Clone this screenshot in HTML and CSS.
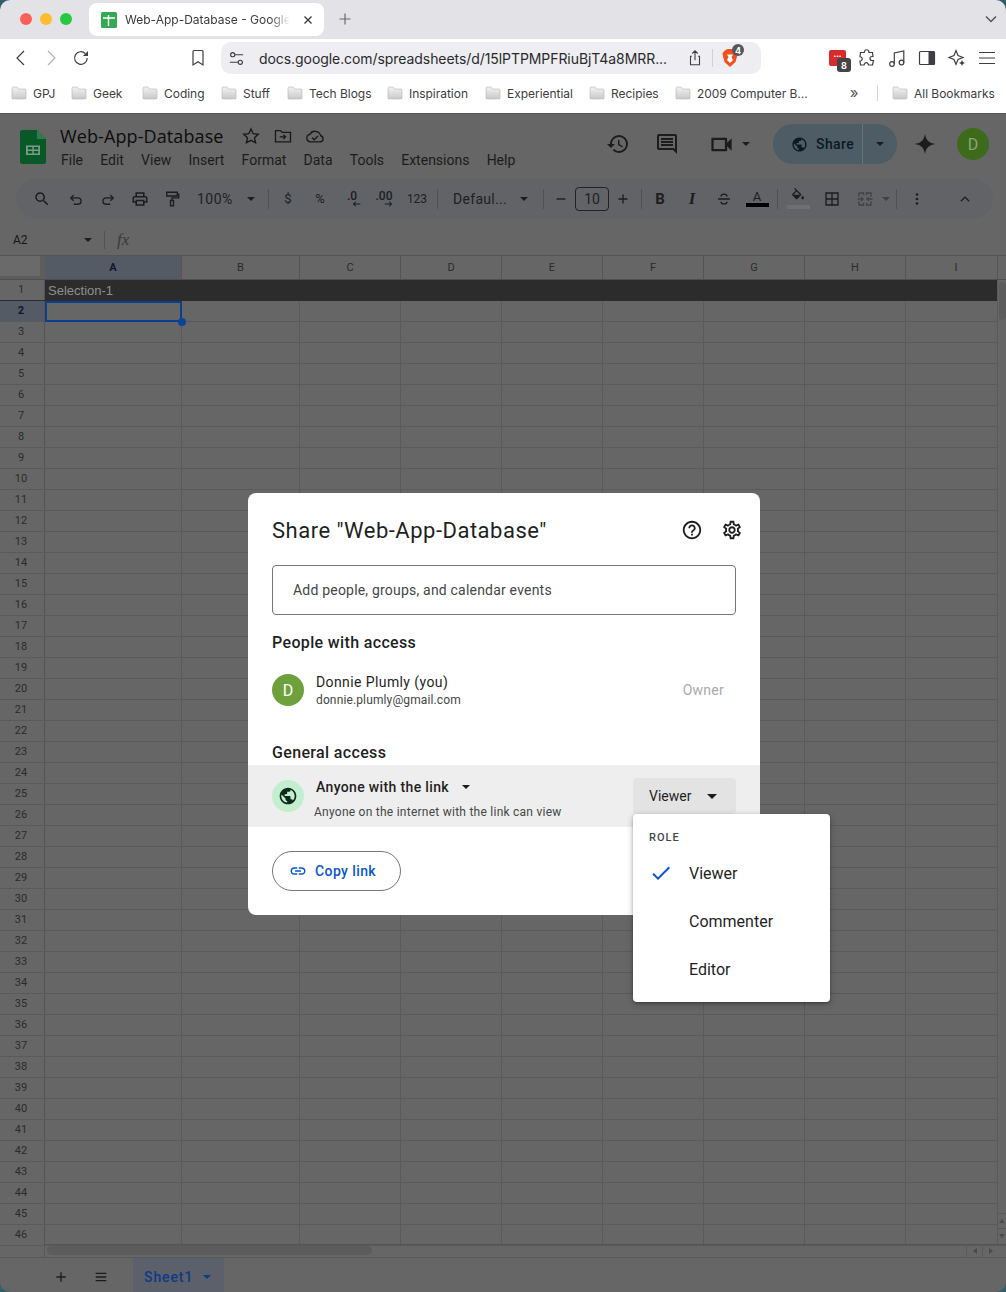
FILE: index.html
```html
<!DOCTYPE html>
<html lang="en">
<head>
  <meta charset="UTF-8" />
  <title>Web-App-Database - Google Sheets</title>
  <link rel="stylesheet" href="styles.css">
</head>
<body>
<svg class="defs" width="0" height="0">
  <defs>
    <linearGradient id="folderFill" x1="0" y1="0" x2="0" y2="1">
      <stop offset="0" stop-color="#f2f2f2" />
      <stop offset="1" stop-color="#c9c9c9" />
    </linearGradient>
    <symbol id="folder" viewBox="0 0 16 14">
      <path d="M1 3V2.2C1 1.5 1.5 1 2.2 1h3.3c.5 0 .8.2 1.1.5L7.5 3H14c.6 0 1 .4 1 1v8c0 .6-.4 1-1 1H2c-.6 0-1-.4-1-1z" fill="url(#folderFill)" stroke="#b5b5b5" stroke-width=".6" />
    </symbol>
    <symbol id="caret" viewBox="0 0 10 5"><path d="M0 0h10L5 5z" /></symbol>
  </defs>
</svg>
<div class="window">

  <div class="tabstrip">
    <div class="lights"><i class="red"></i><i class="yellow"></i><i class="green"></i></div>
    <div class="tab">
      <svg class="tab-icon" viewBox="0 0 16 16"><rect width="16" height="16" rx="1.5" fill="#34a853" /><path d="M2 6h12M7.500 3v11" stroke="#fff" stroke-width="1.500" fill="none" /></svg>
      <span class="tab-title">Web-App-Database - Google</span>
      <svg class="tab-close" viewBox="0 0 10 10"><path d="M1.5 1.5l7 7M8.5 1.5l-7 7" stroke="#3a3a3a" stroke-width="1.3" /></svg>
    </div>
    <svg class="new-tab" viewBox="0 0 12 12"><path d="M6 .5v11M.5 6h11" stroke="#6a6a6e" stroke-width="1.2" /></svg>
    <svg class="tab-list" viewBox="0 0 12 8"><path d="M1 1.5l5 5 5-5" stroke="#55555a" stroke-width="1.5" fill="none" /></svg>
  </div>

  <div class="navbar">
    <svg class="nav-icon back" viewBox="0 0 20 20"><path d="M13 3l-7 7 7 7" /></svg>
    <svg class="nav-icon forward" viewBox="0 0 20 20"><path d="M7 3l7 7-7 7" /></svg>
    <svg class="nav-icon reload" viewBox="0 0 20 20"><path d="M16.2 10a6.3 6.3 0 1 1-1.9-4.5" /><path class="solid" d="M17 3v5h-5z" /></svg>
    <svg class="nav-icon bookmark" viewBox="0 0 20 20"><path d="M5 3.5c0-.5.4-1 1-1h8c.6 0 1 .5 1 1V17l-5-3.2L5 17z" /></svg>
    <div class="urlbar">
      <svg class="nav-icon tune" viewBox="0 0 20 20"><circle cx="6" cy="6" r="2.2" /><path d="M8.5 6H17M3 14h8.500" /><circle cx="14" cy="14" r="2.2" /></svg>
      <span class="url">docs.google.com/spreadsheets/d/15lPTPMPFRiuBjT4a8MRR...</span>
      <svg class="nav-icon share-mac" viewBox="0 0 20 20"><path d="M6.500 8H5v9.500h10V8h-1.500M10 12.500V2.500M7 5l3-3 3 3" /></svg>
      <i class="url-sep"></i>
      <div class="brave">
        <svg viewBox="0 0 16 18"><path d="M3 1.500L5.500 0h5L13 1.500 15.500 4 15 7.500 13.500 13 8 18 2.500 13 1 7.500.5 4z" fill="#f1501f" /><path d="M5 5.500h6L9.500 8 11 11l-3 3-3-3 1.500-3z" fill="#fff" /></svg>
        <b class="badge brave-count">4</b>
      </div>
    </div>
    <div class="ext-red"><span>•••</span><b class="badge ext-count">8</b></div>
    <svg class="nav-icon puzzle" viewBox="0 0 20 20"><path d="M7.500 3.500a2.200 2.200 0 0 1 4.300 0l.2 1h3.500l.5 4h-1a2 2 0 0 0 0 4h1.500l-1 4.500h-4l-.3-1a2 2 0 0 0-3.800 0l-.2 1H3.500l-.5-4 1-.3a2 2 0 0 0 0-3.700l-1-.3.5-4.200h3.700z" /></svg>
    <svg class="nav-icon music" viewBox="0 0 20 20"><circle cx="5" cy="16" r="2.300" /><circle cx="14.500" cy="14.500" r="2.300" /><path d="M7.300 16V5l9.500-2v11.500" /></svg>
    <svg class="nav-icon panel" viewBox="0 0 20 20"><rect x="2.500" y="3.500" width="15" height="13" rx="1" /><path class="solid" d="M11.500 3.500h6v13h-6z" /></svg>
    <svg class="nav-icon sparkle" viewBox="0 0 20 20"><path d="M9 2.500l2 5 5 2-5 2-2 5-2-5-5-2 5-2z" /><path class="solid" d="M15 12l.9 2.100 2.100.9-2.100.9L15 18l-.9-2.100L12 15l2.100-.9z" /></svg>
    <svg class="nav-icon hamburger" viewBox="0 0 20 20"><path d="M2 4.500h16M2 10h16M2 15.500h16" /></svg>
  </div>

  <div class="bookmarks">
    <a class="bm bm-gpj"><svg><use href="#folder" /></svg>GPJ</a>
    <a class="bm bm-geek"><svg><use href="#folder" /></svg>Geek</a>
    <a class="bm bm-coding"><svg><use href="#folder" /></svg>Coding</a>
    <a class="bm bm-stuff"><svg><use href="#folder" /></svg>Stuff</a>
    <a class="bm bm-tech"><svg><use href="#folder" /></svg>Tech Blogs</a>
    <a class="bm bm-insp"><svg><use href="#folder" /></svg>Inspiration</a>
    <a class="bm bm-exp"><svg><use href="#folder" /></svg>Experiential</a>
    <a class="bm bm-rec"><svg><use href="#folder" /></svg>Recipies</a>
    <a class="bm bm-comp"><svg><use href="#folder" /></svg>2009 Computer B...</a>
    <span class="bm-more">&raquo;</span>
    <i class="bm-sep"></i>
    <a class="bm"><svg><use href="#folder" /></svg>All Bookmarks</a>
  </div>

  <div class="app">
    <div class="header">
      <svg class="sheets-logo" viewBox="0 0 26 34"><path d="M2.500 0H17l9 9v22.500a2.500 2.500 0 0 1-2.500 2.500h-21A2.500 2.500 0 0 1 0 31.500v-29A2.500 2.500 0 0 1 2.500 0z" fill="#075a28" /><path d="M17 0l9 9h-9z" fill="#2f7d4e" /><path d="M6 15.500h14v9.500H6zM7.800 17v2.500h4.500V17zm6 0v2.500h4.500V17zm-6 4v2.500h4.500V21zm6 0v2.500h4.500V21z" fill="#7d9a88" fill-rule="evenodd" /></svg>
      <div class="doc-info">
        <div class="doc-title-row">
          <span class="doc-title">Web-App-Database</span>
          <svg class="doc-icon star" viewBox="0 0 24 24"><path d="M12 3.500l2.600 5.700 6.200.7-4.600 4.200 1.300 6.100L12 17.200l-5.500 3 1.300-6.100-4.600-4.200 6.200-.7z" /></svg>
          <svg class="doc-icon move" viewBox="0 0 24 24"><path d="M3 5.500h6l2 2.200h10V19H3zM8 13h7M12.500 10.500L15 13l-2.500 2.500" /></svg>
          <svg class="doc-icon cloud" viewBox="0 0 24 24"><path d="M6.500 19a4.500 4.500 0 0 1-.7-8.900 7 7 0 0 1 13 1.600A3.700 3.700 0 0 1 18 19zM8.500 14l2.500 2.500 4.500-4.500" /></svg>
        </div>
        <div class="menus">
          <span>File</span><span>Edit</span><span>View</span><span>Insert</span><span>Format</span><span>Data</span><span>Tools</span><span>Extensions</span><span>Help</span>
        </div>
      </div>
      <div class="header-right">
        <svg class="head-icon history" viewBox="0 0 24 24"><path d="M13 3a9 9 0 0 0-9 9H1l3.890 3.890.07.14L9 12H6c0-3.870 3.130-7 7-7s7 3.130 7 7-3.130 7-7 7c-1.930 0-3.680-.79-4.940-2.060l-1.420 1.420A8.954 8.954 0 0 0 13 21a9 9 0 0 0 0-18zm-1 5v5l4.280 2.540.72-1.210-3.500-2.080V8H12z" /></svg>
        <svg class="head-icon comment" viewBox="0 0 24 24"><path d="M20 17.170L18.830 16H4V4h16v13.170zM20 2H4c-1.100 0-2 .9-2 2v12c0 1.100.9 2 2 2h14l4 4V4c0-1.100-.9-2-2-2zM6 12h12v2H6zM6 9h12v2H6zM6 6h12v2H6z" /></svg>
        <svg class="head-icon video" viewBox="0 0 24 24"><path d="M15 8v8H5V8h10m1-2H4c-.55 0-1 .45-1 1v10c0 .55.45 1 1 1h12c.55 0 1-.45 1-1v-3.500l4 4v-11l-4 4V7c0-.55-.45-1-1-1z" /></svg>
        <svg class="caret video-caret"><use href="#caret" /></svg>
        <div class="share-btn">
          <div class="share-main">
            <svg viewBox="0 0 24 24"><path d="M12 2C6.480 2 2 6.480 2 12s4.480 10 10 10 10-4.480 10-10S17.520 2 12 2zm-1 17.930c-3.950-.49-7-3.850-7-7.930 0-.62.08-1.210.21-1.790L9 15v1c0 1.100.9 2 2 2v1.930zm6.900-2.540c-.26-.81-1-1.390-1.900-1.390h-1v-3c0-.55-.45-1-1-1H8v-2h2c.55 0 1-.45 1-1V7h2c1.100 0 2-.9 2-2v-.41c2.930 1.190 5 4.060 5 7.410 0 2.080-.8 3.970-2.100 5.390z" /></svg>
            Share
          </div>
          <div class="share-drop"><svg class="caret"><use href="#caret" /></svg></div>
        </div>
        <svg class="head-icon gemini" viewBox="0 0 24 24"><path d="M12 1.500C12.700 8 16 11.300 22.500 12 16 12.700 12.700 16 12 22.500 11.300 16 8 12.700 1.500 12 8 11.300 11.300 8 12 1.500z" /></svg>
        <div class="avatar-top">D</div>
      </div>
    </div>

    <div class="toolbar">
      <button class="tb search"><svg viewBox="0 0 24 24"><path class="solid" d="M15.500 14h-.79l-.28-.27A6.471 6.471 0 0 0 16 9.500 6.500 6.500 0 1 0 9.500 16c1.610 0 3.090-.59 4.230-1.570l.27.28v.79l5 4.990L20.490 19l-4.990-5zm-6 0C7.010 14 5 11.990 5 9.500S7.010 5 9.500 5 14 7.010 14 9.500 11.990 14 9.500 14z" /></svg></button>
      <button class="tb undo"><svg viewBox="0 0 24 24"><path d="M9 6.500L5 10.500l4 4M5 10.500h9.500a4.200 4.200 0 0 1 0 8.500H9" /></svg></button>
      <button class="tb"><svg viewBox="0 0 24 24"><path d="M15 6.500l4 4-4 4M19 10.500H9.500a4.200 4.200 0 0 0 0 8.500H15" /></svg></button>
      <button class="tb"><svg viewBox="0 0 24 24"><path class="solid" d="M19 8h-1V3H6v5H5c-1.660 0-3 1.340-3 3v6h4v4h12v-4h4v-6c0-1.660-1.340-3-3-3zM8 5h8v3H8V5zm8 12v2H8v-4h8v2zm2-2v-2H6v2H4v-4c0-.55.45-1 1-1h14c.55 0 1 .45 1 1v4h-2z" /></svg></button>
      <button class="tb"><svg viewBox="0 0 24 24"><path d="M5 3h14v5H5zM19 5.500h2v5h-9v3M10 14h4v7h-4z" /></svg></button>
      <div class="zoom-select"><span>100%</span><svg class="caret"><use href="#caret" /></svg></div>
      <i class="tb-sep"></i>
      <button class="tb tb-text">$</button>
      <button class="tb tb-text">%</button>
      <button class="tb tb-dec">.0<svg viewBox="0 0 12 8"><path d="M11 4H2M5 1L2 4l3 3" /></svg></button>
      <button class="tb tb-dec">.00<svg viewBox="0 0 12 8"><path d="M1 4h9M7 1l3 3-3 3" /></svg></button>
      <button class="tb tb-num">123</button>
      <i class="tb-sep"></i>
      <div class="font-select"><span>Defaul...</span><svg class="caret"><use href="#caret" /></svg></div>
      <i class="tb-sep"></i>
      <button class="tb tb-size"><svg viewBox="0 0 24 24"><path d="M6 12h12" /></svg></button>
      <div class="size-box">10</div>
      <button class="tb tb-size"><svg viewBox="0 0 24 24"><path d="M6 12h12M12 6v12" /></svg></button>
      <i class="tb-sep"></i>
      <button class="tb tb-bold">B</button>
      <button class="tb tb-ital">I</button>
      <button class="tb"><svg viewBox="0 0 24 24"><path d="M4 12h16M16 8.500C16 6.500 14 5.500 12 5.500S8 6.500 8 8.500M8 15.500c0 2 2 3 4 3s4-1 4-3" /></svg></button>
      <button class="tb tb-color tb-a"><span>A</span><i class="swatch black"></i></button>
      <i class="tb-sep"></i>
      <button class="tb tb-color tb-fill"><svg viewBox="0 0 24 24"><path class="solid" d="M16.560 8.940L7.620 0 6.210 1.410l2.380 2.380-5.150 5.150c-.59.59-.59 1.540 0 2.120l5.500 5.500c.29.29.68.44 1.060.44s.77-.15 1.060-.44l5.500-5.500c.59-.58.59-1.530 0-2.120zM5.210 10L10 5.210 14.790 10H5.210zM19 11.500s-2 2.170-2 3.500c0 1.100.9 2 2 2s2-.9 2-2c0-1.330-2-3.500-2-3.500z" /></svg><i class="swatch fill"></i></button>
      <button class="tb borders"><svg viewBox="0 0 24 24"><path d="M4 4h16v16H4zM12 4v16M4 12h16" /></svg></button>
      <button class="tb merge"><svg viewBox="0 0 24 24"><path d="M4 9V4h6v3M14 7V4h6v5M4 15v5h6v-3M14 17v3h6v-5M2 12h7M22 12h-7M7 9.500L9.500 12 7 14.500M17 9.500L14.500 12l2.500 2.500" /></svg></button>
      <svg class="caret merge-caret"><use href="#caret" /></svg>
      <i class="tb-sep"></i>
      <button class="tb more"><svg viewBox="0 0 24 24"><circle class="solid" cx="12" cy="6" r="1.800" /><circle class="solid" cx="12" cy="12" r="1.800" /><circle class="solid" cx="12" cy="18" r="1.800" /></svg></button>
      <button class="tb collapse"><svg viewBox="0 0 24 24"><path d="M6.500 15l5.500-5.500 5.500 5.500" /></svg></button>
    </div>

    <div class="formula">
      <span class="cell-name">A2</span>
      <svg class="caret"><use href="#caret" /></svg>
      <i class="formula-sep"></i>
      <span class="fx">fx</span>
    </div>

    <div class="col-heads">
      <div class="corner"></div>
      <div class="ch col-a on">A</div>
      <div class="ch col-b">B</div>
      <div class="ch col-n">C</div>
      <div class="ch col-n">D</div>
      <div class="ch col-n">E</div>
      <div class="ch col-n">F</div>
      <div class="ch col-n">G</div>
      <div class="ch col-n">H</div>
      <div class="ch col-i">I</div>
    </div>

    <div class="grid">
      <div class="col-lines">
        <i class="col-a"></i><i class="col-b"></i><i class="col-n"></i><i class="col-n"></i><i class="col-n"></i><i class="col-n"></i><i class="col-n"></i><i class="col-n"></i><i class="col-i"></i>
      </div>
      <div class="row band"><b>1</b><span>Selection-1</span></div>
      <div class="row"><b class="on">2</b><div class="selection"><i class="handle"></i></div></div>
      <div class="row"><b>3</b></div><div class="row"><b>4</b></div><div class="row"><b>5</b></div><div class="row"><b>6</b></div>
      <div class="row"><b>7</b></div><div class="row"><b>8</b></div><div class="row"><b>9</b></div><div class="row"><b>10</b></div>
      <div class="row"><b>11</b></div><div class="row"><b>12</b></div><div class="row"><b>13</b></div><div class="row"><b>14</b></div>
      <div class="row"><b>15</b></div><div class="row"><b>16</b></div><div class="row"><b>17</b></div><div class="row"><b>18</b></div>
      <div class="row"><b>19</b></div><div class="row"><b>20</b></div><div class="row"><b>21</b></div><div class="row"><b>22</b></div>
      <div class="row"><b>23</b></div><div class="row"><b>24</b></div><div class="row"><b>25</b></div><div class="row"><b>26</b></div>
      <div class="row"><b>27</b></div><div class="row"><b>28</b></div><div class="row"><b>29</b></div><div class="row"><b>30</b></div>
      <div class="row"><b>31</b></div><div class="row"><b>32</b></div><div class="row"><b>33</b></div><div class="row"><b>34</b></div>
      <div class="row"><b>35</b></div><div class="row"><b>36</b></div><div class="row"><b>37</b></div><div class="row"><b>38</b></div>
      <div class="row"><b>39</b></div><div class="row"><b>40</b></div><div class="row"><b>41</b></div><div class="row"><b>42</b></div>
      <div class="row"><b>43</b></div><div class="row"><b>44</b></div><div class="row"><b>45</b></div><div class="row"><b>46</b></div>
      <div class="vscroll">
        <i class="vthumb"></i>
        <div class="varrows"><i class="up"></i><i class="down"></i></div>
      </div>
    </div>

    <div class="hscroll">
      <i class="hscroll-gutter"></i>
      <div class="htrack"><i class="hthumb"></i></div>
      <div class="harrows"><i class="left"></i><i class="right"></i></div>
    </div>

    <div class="sheet-tabs">
      <svg class="st-icon add" viewBox="0 0 24 24"><path d="M12 5v14M5 12h14" /></svg>
      <svg class="st-icon all" viewBox="0 0 24 24"><path d="M4 6.500h16M4 12h16M4 17.500h16" /></svg>
      <div class="sheet-tab">Sheet1<svg class="caret"><use href="#caret" /></svg></div>
    </div>

    <div class="dialog">
      <div class="dialog-head">
        <h2>Share "Web-App-Database"</h2>
        <svg class="dialog-icon" viewBox="0 0 24 24"><path d="M11 18h2v-2h-2v2zm1-16C6.480 2 2 6.480 2 12s4.480 10 10 10 10-4.480 10-10S17.520 2 12 2zm0 18c-4.410 0-8-3.590-8-8s3.590-8 8-8 8 3.590 8 8-3.590 8-8 8zm0-14c-2.210 0-4 1.790-4 4h2c0-1.100.9-2 2-2s2 .9 2 2c0 2-3 1.750-3 5h2c0-2.250 3-2.500 3-5 0-2.210-1.790-4-4-4z" /></svg>
        <svg class="dialog-icon" viewBox="0 0 24 24"><path d="M19.430 12.980c.04-.32.07-.64.07-.98 0-.34-.03-.66-.07-.98l2.110-1.650c.19-.15.24-.42.12-.64l-2-3.460c-.09-.16-.26-.25-.44-.25-.06 0-.12.01-.17.03l-2.490 1c-.52-.4-1.080-.73-1.690-.98l-.38-2.650C14.460 2.180 14.250 2 14 2h-4c-.25 0-.46.18-.49.42l-.38 2.650c-.61.25-1.170.59-1.690.98l-2.490-1c-.06-.02-.12-.03-.18-.03-.17 0-.34.09-.43.25l-2 3.460c-.13.22-.07.49.12.64l2.110 1.650c-.04.32-.07.65-.07.98 0 .33.03.66.07.98l-2.110 1.650c-.19.15-.24.42-.12.64l2 3.460c.09.16.26.25.44.25.06 0 .12-.01.17-.03l2.490-1c.52.4 1.080.73 1.690.98l.38 2.650c.03.24.24.42.49.42h4c.25 0 .46-.18.49-.42l.38-2.650c.61-.25 1.170-.59 1.690-.98l2.490 1c.06.02.12.03.18.03.17 0 .34-.09.43-.25l2-3.460c.12-.22.07-.49-.12-.64l-2.110-1.650zm-1.980-1.710c.04.31.05.52.05.73 0 .21-.02.43-.05.73l-.14 1.130.89.7 1.080.84-.7 1.210-1.270-.51-1.040-.42-.9.68c-.43.32-.84.56-1.250.73l-1.060.43-.16 1.130-.2 1.350h-1.400l-.19-1.350-.16-1.130-1.060-.43c-.43-.18-.83-.41-1.230-.71l-.91-.7-1.060.43-1.270.51-.7-1.210 1.080-.84.89-.7-.14-1.130c-.03-.31-.05-.54-.05-.74s.02-.43.05-.73l.14-1.130-.89-.7-1.080-.84.7-1.210 1.270.51 1.040.42.9-.68c.43-.32.84-.56 1.250-.73l1.060-.43.16-1.130.2-1.350h1.390l.19 1.350.16 1.130 1.060.43c.43.18.83.41 1.230.71l.91.7 1.060-.43 1.270-.51.7 1.210-1.070.85-.89.7.14 1.130zM12 8c-2.210 0-4 1.790-4 4s1.790 4 4 4 4-1.790 4-4-1.790-4-4-4zm0 6c-1.100 0-2-.9-2-2s.9-2 2-2 2 .9 2 2-.9 2-2 2z" /></svg>
      </div>
      <div class="add-people">Add people, groups, and calendar events</div>
      <h3 class="people-title">People with access</h3>
      <div class="person">
        <div class="avatar">D</div>
        <div class="person-text">
          <div class="person-name">Donnie Plumly (you)</div>
          <div class="person-mail">donnie.plumly@gmail.com</div>
        </div>
        <span class="owner">Owner</span>
      </div>
      <h3 class="general-title">General access</h3>
      <div class="access-row">
        <div class="globe"><svg viewBox="0 0 24 24"><path d="M12 2C6.480 2 2 6.480 2 12s4.480 10 10 10 10-4.480 10-10S17.520 2 12 2zm-1 17.930c-3.950-.49-7-3.850-7-7.930 0-.62.08-1.210.21-1.790L9 15v1c0 1.100.9 2 2 2v1.930zm6.900-2.540c-.26-.81-1-1.390-1.900-1.390h-1v-3c0-.55-.45-1-1-1H8v-2h2c.55 0 1-.45 1-1V7h2c1.100 0 2-.9 2-2v-.41c2.930 1.190 5 4.060 5 7.410 0 2.080-.8 3.970-2.100 5.390z" /></svg></div>
        <div class="access-text">
          <div class="access-name">Anyone with the link<svg class="caret"><use href="#caret" /></svg></div>
          <div class="access-desc">Anyone on the internet with the link can view</div>
        </div>
        <div class="role-btn">Viewer<svg class="caret"><use href="#caret" /></svg></div>
      </div>
      <div class="dialog-foot">
        <div class="copy-link">
          <svg viewBox="0 0 24 24"><path d="M3.900 12c0-1.710 1.390-3.100 3.100-3.100h4V7H7c-2.760 0-5 2.240-5 5s2.240 5 5 5h4v-1.900H7c-1.710 0-3.100-1.390-3.100-3.100zM8 13h8v-2H8v2zm9-6h-4v1.900h4c1.710 0 3.100 1.390 3.100 3.100s-1.390 3.100-3.100 3.100h-4V17h4c2.760 0 5-2.240 5-5s-2.240-5-5-5z" /></svg>
          Copy link
        </div>
      </div>
    </div>

    <div class="role-menu">
      <div class="role-label">ROLE</div>
      <div class="role-item"><svg viewBox="0 0 24 24"><path d="M9 16.170L4.830 12l-1.420 1.410L9 19 21 7l-1.410-1.410z" /></svg>Viewer</div>
      <div class="role-item">Commenter</div>
      <div class="role-item">Editor</div>
    </div>
  </div>
</div>
</body>
</html>
```

FILE: styles.css
```css
* {
  box-sizing: border-box;
}
html, body {
  margin: 0;
  padding: 0;
  background: #2f5f6b;
}
body {
  width: 1006px;
  height: 1292px;
  overflow: hidden;
  font-family: 'Roboto', 'Liberation Sans', sans-serif;
}
i {
  display: block;
  font-style: normal;
}
.defs {
  position: absolute;
}
.window {
  width: 1006px;
  height: 1292px;
  border-radius: 10px;
  overflow: hidden;
  display: flex;
  flex-direction: column;
}
.caret {
  width: 8px;
  height: 4px;
  fill: #1c1c1e;
  flex: none;
}

/* browser chrome */
.tabstrip {
  height: 39px;
  background: #e2e2e7;
  display: flex;
  align-items: flex-start;
  flex: none;
}
.lights {
  display: flex;
  gap: 8px;
  margin: 13px 0 0 20px;
  width: 69px;
}
.lights i {
  width: 12px;
  height: 12px;
  border-radius: 50%;
}
.red { background: #fe5f57; }
.yellow { background: #febc2e; }
.green { background: #28c840; }
.tab {
  width: 235px;
  height: 33px;
  margin-top: 3px;
  background: #fff;
  border-radius: 8px;
  display: flex;
  align-items: center;
  padding: 0 11px 0 12px;
}
.tab-icon {
  width: 16px;
  height: 16px;
  flex: none;
}
.tab-title {
  margin-left: 8px;
  width: 165px;
  white-space: nowrap;
  font: 12px 'Inter', sans-serif;
  color: #3c3c3c;
  -webkit-mask-image: linear-gradient(to right, #000 88%, transparent);
}
.tab-close {
  width: 10px;
  height: 10px;
  margin-left: 13px;
  flex: none;
}
.new-tab {
  width: 12px;
  height: 12px;
  margin: 13px 0 0 15px;
}
.tab-list {
  width: 12px;
  height: 8px;
  margin: 15px 0 0 634px;
}
.navbar {
  height: 38px;
  background: #fff;
  display: flex;
  align-items: center;
  flex: none;
}
.nav-icon {
  width: 20px;
  height: 20px;
  fill: none;
  stroke: #3f3f43;
  stroke-width: 1.2;
  flex: none;
}
.nav-icon .solid {
  fill: #3f3f43;
  stroke: none;
}
.back { margin-left: 11px; }
.forward { margin-left: 10px; stroke: #b4b4b8; }
.reload { margin-left: 10px; }
.bookmark { margin-left: 97px; }
.urlbar {
  width: 540px;
  height: 32px;
  margin-left: 13px;
  background: #ededf2;
  border-radius: 10px;
  display: flex;
  align-items: center;
  flex: none;
}
.tune {
  margin-left: 6px;
  width: 19px;
  height: 19px;
}
.url {
  margin-left: 13px;
  width: 415px;
  font: 14px 'Inter', sans-serif;
  letter-spacing: -0.07px;
  color: #2a2a2c;
  white-space: nowrap;
}
.share-mac {
  margin-left: 12px;
  width: 18px;
  height: 18px;
}
.url-sep {
  width: 1px;
  height: 18px;
  background: #cfcfd4;
  margin-left: 8px;
}
.brave {
  position: relative;
  width: 16px;
  height: 18px;
  margin-left: 9px;
}
.brave svg {
  width: 16px;
  height: 18px;
  display: block;
}
.badge {
  position: absolute;
  display: flex;
  align-items: center;
  justify-content: center;
  background: #55565f;
  color: #fff;
  font: bold 9px 'Inter', sans-serif;
}
.brave-count {
  left: 10px;
  top: -5px;
  width: 12px;
  height: 12px;
  border-radius: 50%;
}
.ext-red {
  position: relative;
  width: 17px;
  height: 16px;
  margin-left: 68px;
  background: #d92b2b;
  border-radius: 2px;
  color: #fff;
  font-size: 8px;
  line-height: 14px;
  text-align: center;
  flex: none;
}
.ext-count {
  left: 8px;
  top: 8px;
  width: 14px;
  height: 14px;
  border-radius: 3px;
  background: #444;
}
.puzzle { margin-left: 11px; }
.music { margin-left: 10px; }
.panel { margin-left: 10px; }
.sparkle { margin-left: 10px; }
.hamburger { margin-left: 10px; }
.bookmarks {
  height: 37px;
  background: #fff;
  border-bottom: 1px solid #555;
  display: flex;
  align-items: center;
  padding: 0 0 4px 11px;
  flex: none;
  font: 12px 'Inter', sans-serif;
  letter-spacing: -0.03px;
  color: #3d3d3f;
}
.bm {
  display: flex;
  align-items: center;
  gap: 6px;
  white-space: nowrap;
}
.bm svg {
  width: 16px;
  height: 14px;
}
.bm-gpj { width: 60px; }
.bm-geek { width: 71px; }
.bm-coding { width: 79px; }
.bm-stuff { width: 66px; }
.bm-tech { width: 100px; }
.bm-insp { width: 98px; }
.bm-exp { width: 104px; }
.bm-rec { width: 86px; }
.bm-comp { width: 167px; }
.bm-more {
  width: 24px;
  font-size: 15px;
  text-align: center;
  margin-top: -2px;
  color: #55555a;
}
.bm-sep {
  width: 1px;
  height: 16px;
  background: #d5d5d8;
  margin: 0 14px 0 11px;
}

/* sheets app, already dimmed by the dialog scrim */
.app {
  position: relative;
  flex: 1;
  background: #666;
  color: #151515;
  display: flex;
  flex-direction: column;
}
.header {
  height: 65px;
  display: flex;
  align-items: flex-start;
  flex: none;
}
.sheets-logo {
  width: 26px;
  height: 34px;
  margin: 16px 0 0 20px;
  flex: none;
}
.doc-info {
  margin-left: 14px;
}
.doc-title-row {
  display: flex;
  align-items: center;
  height: 24px;
  margin-top: 10px;
}
.doc-title {
  font: 18px 'Open Sans', sans-serif;
  letter-spacing: 0.1px;
  color: #0d0d0d;
  width: 164px;
  white-space: nowrap;
}
.doc-icon {
  width: 20px;
  height: 20px;
  fill: none;
  stroke: #191919;
  stroke-width: 1.6;
  margin-right: 12px;
}
.star { margin-left: 17px; }
.menus {
  display: flex;
  font-size: 14px;
  color: #1c1c1c;
  margin: 3px 0 0 1px;
  gap: 17.2px;
  line-height: 18px;
}
.header-right {
  position: absolute;
  top: 10px;
  right: 17px;
  display: flex;
  align-items: center;
  height: 40px;
}
.head-icon {
  width: 24px;
  height: 24px;
  fill: #1c1c1c;
}
.history { margin-right: 25px; }
.comment { margin-right: 29px; }
.video {
  width: 27px;
  height: 27px;
  margin-right: 7px;
}
.video-caret { margin-right: 23px; }
.share-btn {
  display: flex;
  width: 124px;
  height: 40px;
  border-radius: 20px;
  background: #4e5c66;
  overflow: hidden;
  font: 500 14px 'Roboto', sans-serif;
  color: #0b1a24;
}
.share-main {
  width: 90px;
  border-right: 1px solid #66737c;
  display: flex;
  align-items: center;
  padding-left: 18px;
  gap: 8px;
  letter-spacing: .4px;
}
.share-main svg {
  width: 17px;
  height: 17px;
  fill: #0b1a24;
}
.share-drop {
  flex: 1;
  display: flex;
  align-items: center;
  justify-content: center;
}
.gemini {
  margin-left: 16px;
  width: 24px;
  height: 24px;
}
.avatar-top {
  margin-left: 20px;
  width: 32px;
  height: 32px;
  border-radius: 50%;
  background: #3e6a1c;
  color: #8aa676;
  font-size: 16px;
  display: flex;
  align-items: center;
  justify-content: center;
}
.toolbar {
  margin: 0 13px 0 16px;
  height: 39px;
  background: #626366;
  border-radius: 20px;
  display: flex;
  align-items: center;
  padding-left: 10px;
  flex: none;
}
.tb {
  width: 32px;
  height: 32px;
  padding: 0;
  border: 0;
  background: none;
  display: flex;
  flex-direction: column;
  align-items: center;
  justify-content: center;
  color: #1d1d1e;
  flex: none;
  font-family: 'Roboto', sans-serif;
}
.tb svg {
  width: 18px;
  height: 18px;
  fill: none;
  stroke: #1d1d1e;
  stroke-width: 1.8;
}
.tb svg .solid {
  fill: #1d1d1e;
  stroke: none;
}
.search { margin-right: 2px; }
.zoom-select {
  width: 76px;
  display: flex;
  align-items: center;
  padding-left: 9px;
  font-size: 14px;
  color: #202022;
  gap: 13px;
  letter-spacing: .5px;
}
.zoom-select span {
  width: 37px;
}
.tb-sep {
  width: 1px;
  height: 20px;
  background: #4f5053;
  margin: 0 3.5px;
  flex: none;
}
.tb-text {
  font-size: 13px;
}
.tb-dec {
  font-size: 12px;
  font-weight: 500;
  line-height: 10px;
}
.tb-dec svg {
  width: 9px;
  height: 6px;
  stroke-width: 1.4;
  margin: 0 0 0 8px;
}
.tb-num {
  font-size: 12px;
  margin-left: 1px;
}
.font-select {
  width: 86px;
  margin-left: 12px;
  display: flex;
  align-items: center;
  font-size: 14px;
  color: #202022;
  gap: 13px;
  letter-spacing: .3px;
}
.font-select span {
  width: 54px;
}
.tb-size {
  width: 28px;
}
.size-box {
  width: 34px;
  height: 24px;
  border: 1px solid #222;
  border-radius: 4px;
  font-size: 14px;
  display: flex;
  align-items: center;
  justify-content: center;
  color: #202022;
}
.tb-bold {
  font-size: 15px;
  font-weight: 700;
  margin-left: -1px;
}
.tb-ital {
  font-size: 17px;
  font-style: italic;
  font-weight: 700;
  font-family: 'Liberation Serif', serif;
}
.tb-color {
  font-size: 13px;
  line-height: 13px;
}
.tb-a {
  margin-left: 1px;
}
.swatch {
  width: 23px;
  height: 4px;
}
.swatch.black { background: #000; }
.swatch.fill { background: #6f6f6f; }
.tb-fill {
  margin-left: 1px;
}
.tb-color svg {
  width: 16px;
  height: 16px;
  margin-bottom: 1px;
}
.borders {
  margin-left: 2px;
}
.merge {
  margin-left: 1px;
  opacity: .45;
}
.merge-caret {
  opacity: .45;
  margin: 0 2.5px 0 1px;
}
.collapse {
  margin-left: 16px;
}
.formula {
  height: 37px;
  display: flex;
  align-items: center;
  padding: 7px 0 0 13px;
  flex: none;
  font-size: 12px;
  color: #151515;
}
.cell-name {
  width: 71px;
}
.formula-sep {
  width: 1px;
  height: 18px;
  background: #555;
  margin: 0 12px 0 12px;
}
.fx {
  font: italic 17px 'Liberation Serif', serif;
  color: #3a3a3a;
}
.col-heads {
  height: 25px;
  display: flex;
  flex: none;
  border-top: 1px solid #545454;
  border-bottom: 1px solid #4f4f4f;
  font-size: 11px;
  color: #2b2b2b;
}
.corner {
  width: 45px;
  background: #6a6a6a;
  border-right: 5px solid #5d5d5d;
  border-bottom: 3px solid #5d5d5d;
}
.ch {
  display: flex;
  align-items: center;
  justify-content: center;
  border-right: 1px solid #555;
}
.ch.on {
  background: #545b65;
  color: #0b1a33;
  font-weight: 700;
}
.col-a { width: 137px; }
.col-b { width: 118px; }
.col-n { width: 101px; }
.col-i { width: 92px; }
.ch.col-i {
  padding-left: 9px;
}
.grid {
  position: relative;
  height: 965px;
  flex: none;
  border-bottom: 1px solid #555;
}
.col-lines {
  position: absolute;
  left: 45px;
  top: 0;
  bottom: 0;
  display: flex;
}
.col-lines i {
  border-right: 1px solid #5a5a5a;
}
.row {
  height: 21px;
  display: flex;
  border-bottom: 1px solid #5a5a5a;
  font-size: 11px;
  position: relative;
}
.row b {
  width: 45px;
  flex: none;
  border-right: 1px solid #555;
  text-align: center;
  font-weight: 400;
  color: #2b2b2b;
  line-height: 20px;
  padding-right: 2px;
  background: #666;
}
.row b.on {
  background: #545b65;
  color: #0b1a33;
  font-weight: 700;
}
.row.band {
  border-bottom-color: #2c2c2c;
}
.band span {
  display: block;
  flex: none;
  width: 952px;
  background: #2c2c2c;
  color: #8f8f8f;
  font: 13px 'Liberation Sans', sans-serif;
  line-height: 21px;
  padding-left: 3px;
}
.selection {
  position: absolute;
  left: 45px;
  top: 0;
  width: 137px;
  height: 21px;
  border: 2px solid #0a3f8f;
}
.handle {
  position: absolute;
  right: -6px;
  bottom: -6px;
  width: 8px;
  height: 8px;
  border-radius: 50%;
  background: #0b4596;
}
.vscroll {
  position: absolute;
  right: 0;
  top: 0;
  bottom: 0;
  width: 9px;
  background: #666;
  border-left: 1px solid #5a5a5a;
}
.vthumb {
  margin: 2px 0 0 1px;
  width: 7px;
  height: 38px;
  border-radius: 4px;
  background: #5c5c5c;
}
.varrows {
  position: absolute;
  bottom: 1px;
  left: 0;
  right: 0;
}
.varrows i {
  height: 15px;
  border-top: 1px solid #5a5a5a;
  position: relative;
}
.up::after, .down::after, .left::after, .right::after {
  content: '';
  position: absolute;
  left: 50%;
  top: 50%;
  transform: translate(-50%, -50%);
  border: 3px solid transparent;
}
.up::after { border-bottom: 4px solid #4a4a4a; border-top: 0; }
.down::after { border-top: 4px solid #4a4a4a; border-bottom: 0; }
.left::after { border-right: 4px solid #4a4a4a; border-left: 0; }
.right::after { border-left: 4px solid #4a4a4a; border-right: 0; }
.hscroll {
  height: 13px;
  display: flex;
  flex: none;
  border-bottom: 1px solid #595959;
}
.hscroll-gutter {
  width: 45px;
  border-right: 1px solid #5a5a5a;
}
.htrack {
  width: 921px;
  padding: 1px 0 0 2px;
}
.hthumb {
  width: 325px;
  height: 9px;
  border-radius: 5px;
  background: #5c5c5c;
}
.harrows {
  display: flex;
}
.harrows i {
  width: 16px;
  border-left: 1px solid #5a5a5a;
  position: relative;
}
.sheet-tabs {
  flex: 1;
  display: flex;
  align-items: center;
}
.st-icon {
  width: 16px;
  height: 16px;
  fill: none;
  stroke: #1c1c1c;
  stroke-width: 2;
  margin-top: 4px;
}
.add { margin-left: 53px; }
.all { margin-left: 24px; }
.sheet-tab {
  margin-left: 24px;
  width: 91px;
  height: 100%;
  background: #5b606a;
  color: #0e3a86;
  font: 500 14px 'Roboto', sans-serif;
  letter-spacing: .9px;
  display: flex;
  align-items: center;
  padding: 4px 0 0 11px;
  gap: 10px;
}
.sheet-tab .caret {
  fill: #0e3a86;
}

/* share dialog */
.dialog {
  position: absolute;
  left: 248px;
  top: 379px;
  width: 512px;
  height: 422px;
  background: #fff;
  border-radius: 8px;
  color: #1f1f1f;
}
.dialog-head {
  display: flex;
  align-items: center;
  padding: 2px 17px 0 24px;
  height: 72px;
  gap: 18px;
}
.dialog-head h2 {
  margin: 0 auto 0 0;
  font: 400 22px 'Roboto', sans-serif;
  letter-spacing: .5px;
  color: #1f1f1f;
}
.dialog-icon {
  width: 22px;
  height: 22px;
  fill: #1f1f1f;
}
.add-people {
  margin-left: 24px;
  width: 464px;
  height: 50px;
  border: 1px solid #747775;
  border-radius: 4px;
  display: flex;
  align-items: center;
  padding-left: 20px;
  font-size: 14px;
  letter-spacing: .2px;
  color: #444746;
}
h3 {
  margin: 0;
  font: 500 16px 'Roboto', sans-serif;
  letter-spacing: .35px;
  color: #1f1f1f;
}
.people-title {
  margin: 18px 0 0 24px;
  line-height: 20px;
}
.person {
  display: flex;
  align-items: center;
  margin: 21px 36px 0 24px;
}
.avatar {
  width: 32px;
  height: 32px;
  border-radius: 50%;
  background: #6ea13c;
  color: #fff;
  font-size: 16px;
  display: flex;
  align-items: center;
  justify-content: center;
}
.person-text {
  margin: -2px 0 0 12px;
  padding-top: 1px;
  height: 34px;
}
.person-name {
  font-size: 14px;
  line-height: 18px;
  letter-spacing: .4px;
}
.person-mail {
  font-size: 12px;
  line-height: 18px;
  letter-spacing: .13px;
  color: #444746;
}
.owner {
  margin: -1px 0 0 auto;
  font-size: 14px;
  letter-spacing: .25px;
  color: #aaa;
}
.general-title {
  margin: 37px 0 0 24px;
  line-height: 20px;
}
.access-row {
  margin-top: 2px;
  height: 62px;
  background: #eee;
  display: flex;
  align-items: flex-start;
  padding: 13px 24px 0;
}
.globe {
  margin-top: 2px;
  width: 32px;
  height: 32px;
  border-radius: 50%;
  background: #c4eed0;
  display: flex;
  align-items: center;
  justify-content: center;
}
.globe svg {
  width: 20px;
  height: 20px;
  fill: #0f2b17;
}
.access-text {
  margin-left: 12px;
}
.access-name {
  font-size: 14px;
  font-weight: 500;
  line-height: 18px;
  letter-spacing: .35px;
  display: flex;
  align-items: center;
  gap: 13px;
}
.access-desc {
  margin: 7px 0 0 -2px;
  font-size: 12px;
  line-height: 18px;
  letter-spacing: .25px;
  color: #444746;
}
.role-btn {
  margin-left: auto;
  width: 103px;
  height: 36px;
  background: #e3e3e3;
  border-radius: 4px;
  display: flex;
  align-items: center;
  padding-left: 16px;
  gap: 16px;
  font-size: 14px;
  color: #1f1f1f;
}
.role-btn .caret {
  width: 10px;
  height: 5px;
}
.dialog-foot {
  padding: 24px;
}
.copy-link {
  width: 129px;
  height: 40px;
  border: 1px solid #747775;
  border-radius: 20px;
  display: flex;
  align-items: center;
  padding-left: 16px;
  gap: 8px;
  font-size: 14px;
  font-weight: 500;
  letter-spacing: .4px;
  color: #0b57d0;
}
.copy-link svg {
  width: 18px;
  height: 18px;
  fill: #0b57d0;
}
.role-menu {
  position: absolute;
  left: 633px;
  top: 700px;
  width: 197px;
  height: 188px;
  background: #fff;
  border-radius: 4px;
  box-shadow: 0 2px 6px rgba(0, 0, 0, .3), 0 1px 2px rgba(0, 0, 0, .2);
  color: #1f1f1f;
}
.role-label {
  margin: 17px 0 0 16px;
  font-size: 11px;
  font-weight: 500;
  letter-spacing: 1px;
  line-height: 13px;
  color: #444746;
}
.role-item {
  position: relative;
  height: 48px;
  display: flex;
  align-items: center;
  padding-left: 56px;
  font-size: 16px;
  top: 5px;
}
.role-item svg {
  position: absolute;
  left: 16px;
  top: 12px;
  width: 24px;
  height: 24px;
  fill: #0b57d0;
}
```
